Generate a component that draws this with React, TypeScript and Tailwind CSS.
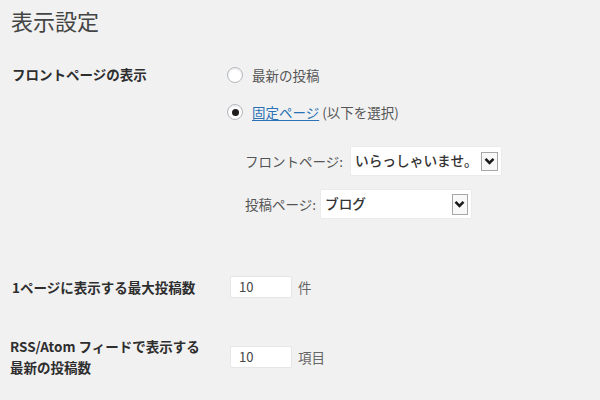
import React from "react";

function Radio({ checked }: { checked?: boolean }) {
  return (
    <span className="w-[16px] h-[16px] rounded-full border border-[#b4b9be] bg-white shadow-[inset_0_1px_2px_rgba(0,0,0,0.1)] flex items-center justify-center shrink-0">
      {checked && <span className="w-[7px] h-[7px] rounded-full bg-[#1e1e1e]" />}
    </span>
  );
}

function Chevron() {
  return (
    <svg width="11" height="8" viewBox="0 0 11 8">
      <path d="M1.5 1.8 L5.5 5.8 L9.5 1.8" fill="none" stroke="#1a1a1a" strokeWidth="2.6" />
    </svg>
  );
}

function Select({ value, w, h, arrowW, arrowH }: { value: string; w: string; h: string; arrowW: string; arrowH: string }) {
  return (
    <div className={`${w} ${h} bg-white flex items-center pl-[4px] pr-[3px] shadow-[0_0_1px_rgba(0,0,0,0.15)]`}>
      <span className="flex-1 text-[13.7px] text-[#333] font-medium leading-none">{value}</span>
      <span className={`${arrowW} ${arrowH} border border-[#a7a7a7] bg-[#f8f8f8] flex items-center justify-center`}>
        <Chevron />
      </span>
    </div>
  );
}

function NumInput({ value }: { value: string }) {
  return (
    <div className="w-[62px] h-[22px] bg-white rounded-[2px] border border-[#e6e6e6] flex items-center pl-[8px] text-[13px] text-[#444]">
      {value}
    </div>
  );
}

export default function App() {
  return (
    <div className="w-[600px] h-[400px] overflow-hidden bg-[#f1f1f1] font-['Noto_Sans_CJK_JP','Noto_Sans',sans-serif] text-[#333]">
      <h1 className="pl-[11px] pt-[8px] text-[22px] leading-[24px] text-[#444] font-normal">表示設定</h1>

      {/* フロントページの表示 */}
      <div className="mt-[32px] flex">
        <div className="w-[227px] pl-[12px] text-[13.5px] leading-[20px] font-bold text-[#2e2e2e]">
          フロントページの表示
        </div>
        <div className="flex flex-col">
          <label className="h-[22px] flex items-center gap-[9px] text-[13.5px] text-[#555]">
            <Radio />
            最新の投稿
          </label>
          <label className="mt-[15px] h-[22px] flex items-center gap-[9px] text-[13.5px] text-[#555]">
            <Radio checked />
            <span>
              <span className="text-[#2a72b5] underline underline-offset-2">固定ページ</span> (以下を選択)
            </span>
          </label>
          <div className="mt-[24px] pl-[18px] flex items-center gap-[8px]">
            <span className="text-[13.5px] text-[#555]">フロントページ:</span>
            <Select value="いらっしゃいませ。" w="w-[150px]" h="h-[28px]" arrowW="w-[17px]" arrowH="h-[19px]" />
          </div>
          <div className="mt-[15px] pl-[18px] flex items-center gap-[5px]">
            <span className="text-[13.5px] text-[#555]">投稿ページ:</span>
            <Select value="ブログ" w="w-[150px]" h="h-[28px]" arrowW="w-[16px]" arrowH="h-[21px]" />
          </div>
        </div>
      </div>

      {/* 1ページに表示する最大投稿数 */}
      <div className="mt-[57px] flex items-center h-[24px]">
        <div className="w-[230px] pl-[12px] text-[13.5px] leading-[20px] font-bold text-[#2e2e2e]">
          1ページに表示する最大投稿数
        </div>
        <NumInput value="10" />
        <span className="ml-[6px] text-[13.5px] text-[#666]">件</span>
      </div>

      {/* RSS/Atom */}
      <div className="mt-[37px] flex items-center">
        <div className="w-[230px] pl-[10px] text-[13.5px] leading-[21px] font-bold text-[#2e2e2e]">
          RSS/Atom フィードで表示する
          <br />
          最新の投稿数
        </div>
        <NumInput value="10" />
        <span className="ml-[6px] text-[13.5px] text-[#666]">項目</span>
      </div>
    </div>
  );
}
